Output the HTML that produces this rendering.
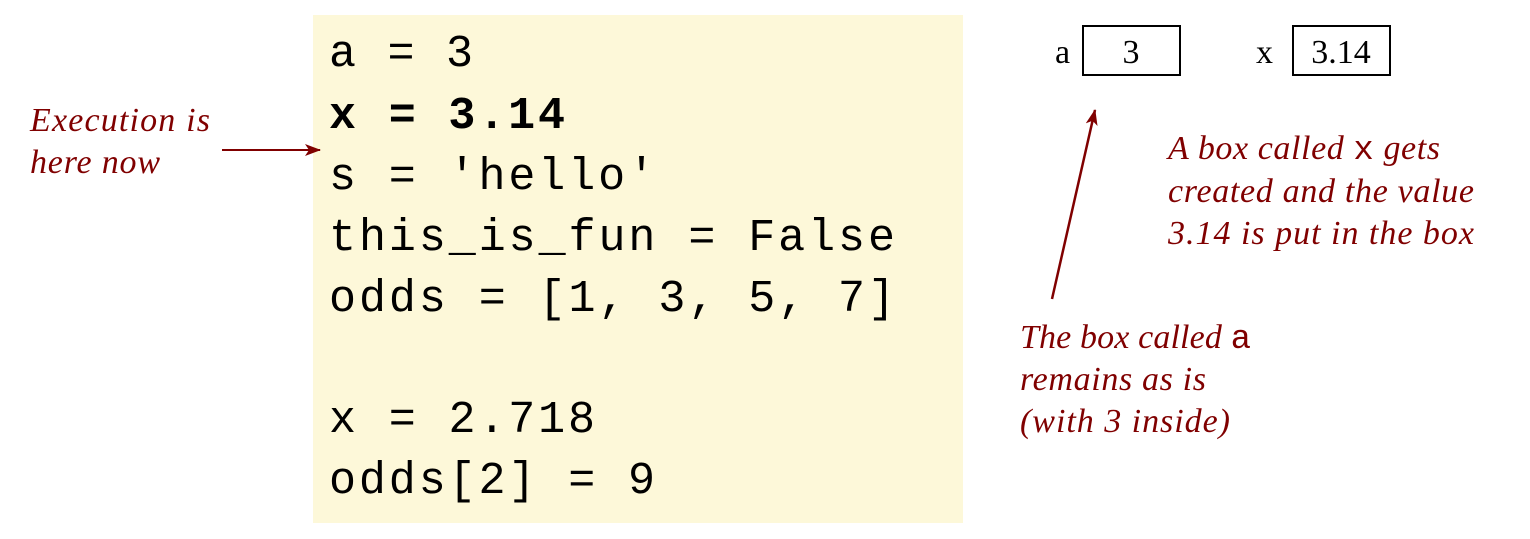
<!DOCTYPE html>
<html><head><meta charset="utf-8"><style>
html,body{margin:0;padding:0;background:#fff;width:1530px;height:539px;overflow:hidden}
svg{display:block}
.code{font-family:"Liberation Mono",monospace;font-size:45px;fill:#000}
.note{font-family:"Liberation Serif",serif;font-style:italic;font-size:34px;fill:#800000}
.lab{font-family:"Liberation Serif",serif;font-size:34px;fill:#000}
</style></head><body>
<svg width="1530" height="539" viewBox="0 0 1530 539">
<defs>
<marker id="ah" markerWidth="16" markerHeight="12" refX="15" refY="6" orient="auto" markerUnits="userSpaceOnUse">
<path d="M0,0 L16,6 L0,12 L4,6 Z" fill="#800000"/>
</marker>
</defs>
<rect x="313" y="15" width="650" height="508" fill="#fdf8d9"/>
<text class="code" x="329" y="66" textLength="144">a = 3</text>
<text class="code" x="329" y="128" font-weight="bold" textLength="236">x = 3.14</text>
<text class="code" x="329" y="189" textLength="326">s = 'hello'</text>
<text class="code" x="329" y="250" textLength="566">this_is_fun = False</text>
<text class="code" x="329" y="311" textLength="566">odds = [1, 3, 5, 7]</text>
<text class="code" x="329" y="432" textLength="266">x = 2.718</text>
<text class="code" x="329" y="493" textLength="326">odds[2] = 9</text>

<text class="note" x="30" y="131" textLength="180">Execution is</text>
<text class="note" x="30" y="173" textLength="130">here now</text>
<line x1="222" y1="150" x2="320" y2="150" stroke="#800000" stroke-width="2" marker-end="url(#ah)"/>

<text class="lab" x="1055" y="63">a</text>
<rect x="1083" y="26" width="97" height="49" fill="none" stroke="#000" stroke-width="2"/>
<text class="lab" x="1131" y="63" text-anchor="middle">3</text>
<text class="lab" x="1256" y="63">x</text>
<rect x="1293" y="26" width="97" height="49" fill="none" stroke="#000" stroke-width="2"/>
<text class="lab" x="1341" y="63" text-anchor="middle">3.14</text>

<line x1="1052" y1="299" x2="1095" y2="110" stroke="#800000" stroke-width="2.5" marker-end="url(#ah)"/>

<text class="note" x="1168" y="159" textLength="272">A box called <tspan font-family="Liberation Mono" font-style="normal">x</tspan> gets</text>
<text class="note" x="1168" y="202" textLength="306">created and the value</text>
<text class="note" x="1168" y="244" textLength="306">3.14 is put in the box</text>

<text class="note" x="1020" y="348" textLength="231">The box called <tspan font-family="Liberation Mono" font-style="normal">a</tspan></text>
<text class="note" x="1020" y="390" textLength="186">remains as is</text>
<text class="note" x="1020" y="432" textLength="210">(with 3 inside)</text>
</svg>
</body></html>
